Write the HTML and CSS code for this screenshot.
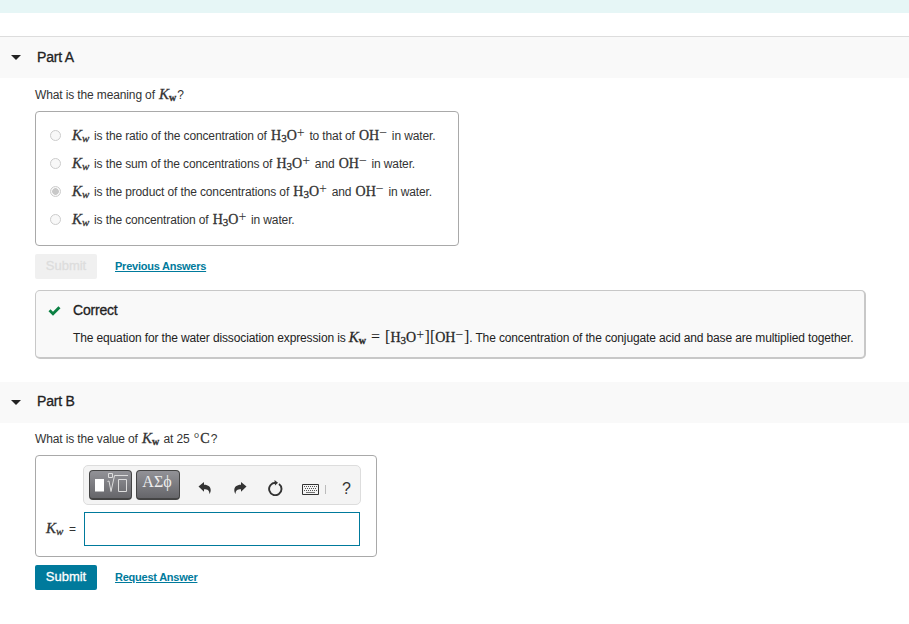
FILE: index.html
```html
<!DOCTYPE html>
<html lang="en">
<head>
    <meta charset="UTF-8">
    <meta name="viewport" content="width=device-width, initial-scale=1.0">
    <title>Ion-Product Constant of Water</title>
    <link rel="stylesheet" href="styles.css">
</head>
<body>
    <div class="top-band"></div>

    <section class="part part-a">
        <header class="part-header">
            <span class="caret"></span>
            <h2>Part A</h2>
        </header>
        <div class="part-body">
            <p class="question">What is the meaning of <span class="math"><i>K</i><sub class="bold">w</sub></span>?</p>

            <ul class="options">
                <li>
                    <span class="radio"></span>
                    <p><span class="math kw"><i>K</i><sub><i>w</i></sub></span> is the ratio of the concentration of <span class="math">H<sub>3</sub>O<sup>+</sup></span> to that of <span class="math">OH<sup>−</sup></span> in water.</p>
                </li>
                <li>
                    <span class="radio"></span>
                    <p><span class="math kw"><i>K</i><sub><i>w</i></sub></span> is the sum of the concentrations of <span class="math">H<sub>3</sub>O<sup>+</sup></span> and <span class="math">OH<sup>−</sup></span> in water.</p>
                </li>
                <li>
                    <span class="radio checked"></span>
                    <p><span class="math kw"><i>K</i><sub><i>w</i></sub></span> is the product of the concentrations of <span class="math">H<sub>3</sub>O<sup>+</sup></span> and <span class="math">OH<sup>−</sup></span> in water.</p>
                </li>
                <li>
                    <span class="radio"></span>
                    <p><span class="math kw"><i>K</i><sub><i>w</i></sub></span> is the concentration of <span class="math">H<sub>3</sub>O<sup>+</sup></span> in water.</p>
                </li>
            </ul>

            <div class="actions">
                <button class="submit" disabled>Submit</button>
                <a href="#previous">Previous Answers</a>
            </div>

            <div class="feedback">
                <svg class="check" viewBox="0 0 13 10" width="13" height="10"><path d="M0.5 5.3 2.5 3.3 5 5.7 10.4 0.3 12.5 2.3 5 9.8z" fill="#0b8043"/></svg>
                <div>
                    <h3>Correct</h3>
                    <p>The equation for the water dissociation expression is <span class="math equation"><i>K</i><sub class="bold">w</sub><span class="eq">=</span><span class="br">[</span>H<sub>3</sub>O<sup>+</sup><span class="br">][</span>OH<sup>−</sup><span class="br">]</span></span>. The concentration of the conjugate acid and base are multiplied together.</p>
                </div>
            </div>
        </div>
    </section>

    <section class="part part-b">
        <header class="part-header">
            <span class="caret"></span>
            <h2>Part B</h2>
        </header>
        <div class="part-body">
            <p class="question">What is the value of <span class="math"><i>K</i><sub class="bold">w</sub></span> at 25 <span class="math celsius"><sup>°</sup>C</span>?</p>

            <div class="answer">
                <div class="toolbar">
                    <button class="palette" aria-label="Templates">
                        <svg viewBox="0 0 41 27" width="41" height="27" fill="none" stroke="#ddd">
                            <rect x="5" y="8" width="9" height="12.5" fill="#fff" stroke="none"/>
                            <path d="M18.5 2.500h4v4h-4zM17.500 10.500l1.500-.5 2 10.500 3.500-16H38"/>
                            <path d="M28.500 8.500h8v12h-8z"/>
                        </svg>
                    </button>
                    <button class="palette greek">ΑΣϕ</button>
                    <svg class="tool undo" viewBox="0 0 14 14" width="14" height="14"><path d="M0.500 5.500 6 1v2.700c4.500 0 6.700 2.300 6.700 5.300 0 1.700-.5 3-1.300 4 .1-3.500-1.600-4.700-5.400-4.700v2.500z" fill="#333"/></svg>
                    <svg class="tool redo" viewBox="0 0 14 14" width="14" height="14"><path d="M13.500 5.500 8 1v2.700c-4.500 0-6.700 2.300-6.700 5.300 0 1.700.5 3 1.300 4-.1-3.500 1.600-4.700 5.400-4.700v2.500z" fill="#333"/></svg>
                    <svg class="tool reset" viewBox="0 0 16 16" width="16" height="16"><path d="M12 4A6.200 6.200 0 1 1 8.500 2.800" fill="none" stroke="#333" stroke-width="1.900"/><path d="M7.500 0 11 2.800 8 5.500z" fill="#333"/></svg>
                    <svg class="tool keyboard" viewBox="0 0 17 11" width="17" height="11" fill="none" stroke="#333"><path d="M.5.5h16v10H.5z"/><path d="M2 2.500h13M3 4.500h12M2 6.500h13" stroke="#555" stroke-dasharray="1 1"/><path d="M4 8.500h9" stroke="#777"/></svg>
                    <span class="divider"></span>
                    <span class="help">?</span>
                </div>
                <label for="kw-input"><span class="math kw"><i>K</i><sub><i>w</i></sub></span> =</label>
                <input id="kw-input" type="text">
            </div>

            <div class="actions">
                <button class="submit">Submit</button>
                <a href="#request">Request Answer</a>
            </div>
        </div>
    </section>
</body>
</html>
```

FILE: styles.css
```css
:root {
    --teal: #007a9c;
    --text-color: #333;
    --border: #a9a9a9;
}

* {
    margin: 0;
    padding: 0;
    box-sizing: border-box;
}

body {
    font-family: "Liberation Sans", Arial, sans-serif;
    font-size: 12px;
    line-height: 18px;
    letter-spacing: -0.13px;
    color: var(--text-color);
    background: #fff;
}

.top-band {
    height: 13px;
    margin-bottom: 23px;
    background: #e6f6f6;
}

.part-header {
    display: flex;
    align-items: center;
    height: 41px;
    padding-left: 11px;
    background: #f9f9f9;
}

.part-a .part-header {
    height: 42px;
    border-top: 1px solid #ddd;
}

.caret {
    border: 5px solid transparent;
    border-top-color: #222;
    border-bottom: 0;
    margin-right: 16px;
}

h2, h3 {
    font-size: 14px;
    font-weight: normal;
    letter-spacing: -0.2px;
    color: #222;
    -webkit-text-stroke: 0.3px #222;
}

h2 {
    padding-bottom: 2px;
}

.part-b h2 {
    padding-bottom: 3px;
}

.part-body {
    padding: 8px 0 0 35px;
}

.question {
    white-space: nowrap;
}

/* Math */
.math {
    margin: 0 1px;
    font-family: "Liberation Serif", "Times New Roman", serif;
    font-size: 14px;
    line-height: 0;
    letter-spacing: 0;
    white-space: nowrap;
    -webkit-text-stroke: 0.3px #333;
}

.math > i {
    font-size: 15px;
}

.math sub,
.math sup {
    line-height: 0;
}

.math sub {
    font-size: 11px;
    vertical-align: -2px;
}

.math sup {
    margin-right: 0.5px;
    font-size: 14px;
    vertical-align: 3px;
    -webkit-text-stroke: 0;
}

.math .bold {
    font-size: 10px;
    font-weight: bold;
}

.math.kw {
    margin: 0 1.5px 0 0;
}

.options {
    display: flex;
    flex-direction: column;
    width: 424px;
    height: 135px;
    margin-top: 7px;
    padding: 10px 0 0 14px;
    list-style: none;
    border: 1px solid var(--border);
    border-radius: 4px;
}

.options li {
    display: flex;
    align-items: center;
    height: 28px;
    white-space: nowrap;
}

.radio {
    width: 11px;
    height: 11px;
    margin: 0 11px 1px 0;
    border: 1px solid #ccc;
    border-radius: 50%;
    background: #f8f8f8;
}

.radio.checked {
    background: radial-gradient(circle, #c8c8c8 3px, #f8f8f8 3.6px);
}

.actions {
    display: flex;
    align-items: center;
    margin-top: 8px;
}

.submit {
    width: 62px;
    height: 25px;
    margin-right: 18px;
    padding-bottom: 2px;
    font: 13px "Liberation Sans", Arial, sans-serif;
    color: #fff;
    background: var(--teal);
    border: 0;
    border-radius: 2px;
    -webkit-text-stroke: 0.3px;
}

.submit:disabled {
    color: #ddd;
    background: #f0f0f0;
}

.actions a {
    margin-bottom: 2px;
    font-size: 11px;
    font-weight: bold;
    letter-spacing: -0.24px;
    color: var(--teal);
}

.feedback {
    display: flex;
    width: 831px;
    height: 69px;
    margin-top: 11px;
    padding: 10px 0 0 13px;
    white-space: nowrap;
    color: #222;
    background: #f9f9f9;
    border: 1px solid #c8c8c8;
    border-right-width: 2px;
    border-bottom-width: 2px;
    border-radius: 5px;
}

.check {
    margin: 5px 12px 0 -1px;
}

.feedback p {
    margin-top: 10px;
}

.math.equation {
    margin: 0;
}

.math .eq {
    margin: 0 5px;
    font-size: 16px;
    -webkit-text-stroke: 0;
}

.math .br {
    font-size: 16px;
    -webkit-text-stroke: 0;
}

.celsius sup {
    margin-right: 1px;
    vertical-align: 0;
}

.part-b {
    margin-top: 23px;
}

.part-b .part-body {
    padding-top: 7px;
}

.answer {
    display: grid;
    grid-template-columns: 48px 276px;
    grid-template-rows: 40px 34px;
    row-gap: 7px;
    width: 342px;
    height: 102px;
    margin-top: 7px;
    padding-top: 9px;
    border: 1px solid var(--border);
    border-radius: 4px;
}

.toolbar {
    display: flex;
    grid-column: 2;
    align-items: center;
    width: 278px;
    margin-left: -1px;
    padding-left: 5px;
    background: #f4f4f4;
    border: 1px solid #ddd;
    border-radius: 5px;
}

.palette {
    width: 43px;
    height: 30px;
    margin-right: 4px;
    background: linear-gradient(#929297, #66666a);
    border: 1px solid #444;
    border-bottom-width: 2px;
    border-radius: 4px;
}

.palette svg {
    display: block;
}

.greek {
    width: 44px;
    padding: 0 2px 5px 0;
    font: 16px "Liberation Serif", serif;
    color: #eee;
}

.undo {
    margin: 5px 21px 0 14px;
}

.redo {
    margin: 5px 20px 0 0;
}

.reset {
    margin: 5px 19px 0 0;
}

.keyboard {
    margin: 9px 6px 0 0;
}

.divider {
    width: 1px;
    height: 9px;
    margin: 9px 16px 0 0;
    background: #bbb;
}

.help {
    margin-top: 7px;
    font-size: 16px;
}

.answer label {
    align-self: center;
    padding-left: 10px;
    white-space: nowrap;
    word-spacing: 1px;
}

.answer input {
    width: 276px;
    height: 34px;
    padding: 0 6px;
    border: 1px solid var(--teal);
}
```
